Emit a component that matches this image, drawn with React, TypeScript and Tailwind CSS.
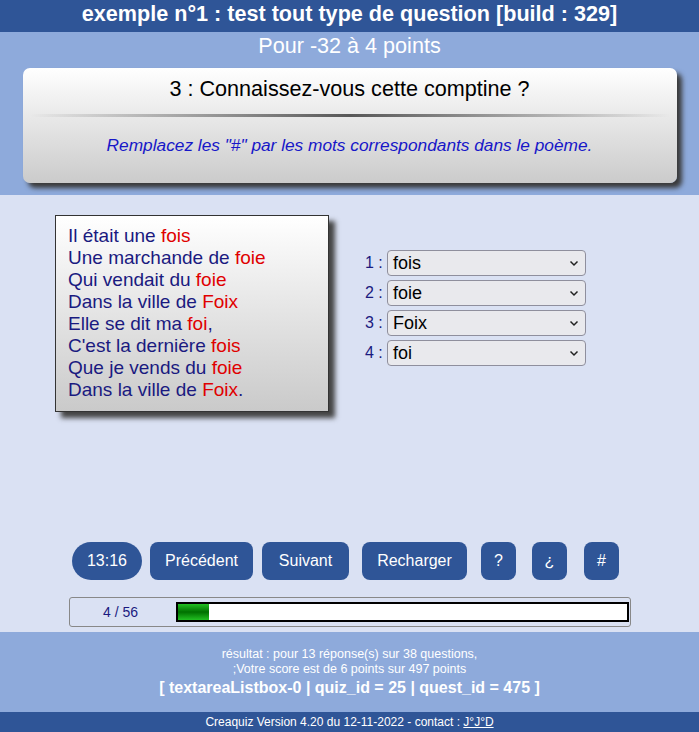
import React from "react";

const R = ({ children }: { children: React.ReactNode }) => (
  <span className="text-[#e00000]">{children}</span>
);

const options = ["fois", "foie", "Foix", "foi"];

export default function App() {
  return (
    <div
      className="w-[699px] h-[732px] flex flex-col bg-[#dae1f3]"
      style={{ fontFamily: '"Liberation Sans", Arial, sans-serif' }}
    >
      {/* header */}
      <div className="h-[32px] bg-[#2f5597] flex items-center justify-center text-white font-bold text-[21.6px] pb-[3px]">
        exemple n°1 : test tout type de question [build : 329]
      </div>
      {/* top blue */}
      <div className="h-[163px] bg-[#8eaadb] flex flex-col items-center">
        <div className="h-[28px] flex items-center text-white text-[21.6px]">
          Pour -32 à 4 points
        </div>
        <div className="mt-[8px] w-[654px] h-[115px] rounded-[7px] bg-gradient-to-b from-white to-[#cbcbcb] shadow-[5px_5px_5px_#3a3a3a] flex flex-col items-center">
          <div className="mt-[9px] h-[24px] flex items-center text-[21.6px] text-black">
            3 : Connaissez-vous cette comptine ?
          </div>
          <div className="mt-[13px] w-[640px] h-[3px] bg-[linear-gradient(to_right,rgba(0,0,0,0),#333_50%,rgba(0,0,0,0))] opacity-80" />
          <div className="mt-[16px] italic text-[17.3px] text-[#1717c8]">
            Remplacez les "#" par les mots correspondants dans le poème.
          </div>
        </div>
      </div>
      {/* main */}
      <div className="h-[437px] flex flex-col">
        <div className="h-[347px] flex pt-[20px]">
          <div className="ml-[55px] w-[274px] h-[197px] border border-[#333] bg-gradient-to-b from-white to-[#cacaca] shadow-[6px_6px_5px_#444] pl-[12px] pt-[9px] text-[19px] leading-[22px] text-[#1a1a80]">
            <div>Il était une <R>fois</R></div>
            <div>Une marchande de <R>foie</R></div>
            <div>Qui vendait du <R>foie</R></div>
            <div>Dans la ville de <R>Foix</R></div>
            <div>Elle se dit ma <R>foi</R>,</div>
            <div>C'est la dernière <R>fois</R></div>
            <div>Que je vends du <R>foie</R></div>
            <div>Dans la ville de <R>Foix</R>.</div>
          </div>
          <div className="ml-[36px] mt-[35px] flex flex-col gap-[4px]">
            {options.map((o, i) => (
              <div key={o} className="flex items-center h-[26px]">
                <span className="w-[22px] text-[16px] text-[#1a1a80]">{i + 1} :</span>
                <div className="w-[199px] h-[26px] rounded-[4px] border border-[#8f8f9d] bg-[#e9e9ed] flex items-center justify-between pl-[5px] pr-[6px] text-[18px] text-black">
                  <span>{o}</span>
                  <svg width="10" height="7" viewBox="0 0 10 7">
                    <path d="M1.5 1.5 L5 5 L8.5 1.5" fill="none" stroke="#222" strokeWidth="1.5" />
                  </svg>
                </div>
              </div>
            ))}
          </div>
        </div>
        {/* buttons */}
        <div className="h-[38px] flex items-center text-white text-[16px]">
          <div className="ml-[72px] w-[70px] h-[38px] rounded-full bg-[#2f5597] flex items-center justify-center">13:16</div>
          <div className="ml-[8px] w-[103px] h-[38px] rounded-[8px] bg-[#2f5597] flex items-center justify-center">Précédent</div>
          <div className="ml-[9px] w-[87px] h-[38px] rounded-[8px] bg-[#2f5597] flex items-center justify-center">Suivant</div>
          <div className="ml-[13px] w-[105px] h-[38px] rounded-[8px] bg-[#2f5597] flex items-center justify-center">Recharger</div>
          <div className="ml-[14px] w-[35px] h-[38px] rounded-[8px] bg-[#2f5597] flex items-center justify-center">?</div>
          <div className="ml-[16px] w-[35px] h-[38px] rounded-[8px] bg-[#2f5597] flex items-center justify-center">¿</div>
          <div className="ml-[17px] w-[35px] h-[38px] rounded-[8px] bg-[#2f5597] flex items-center justify-center">#</div>
        </div>
        {/* progress */}
        <div className="mt-[17px] ml-[69px] w-[562px] h-[30px] rounded-[3px] border border-[#888] flex items-center">
          <span className="ml-[33px] w-[73px] text-[14px] text-[#1a1a80]">4 / 56</span>
          <div className="w-[453px] h-[20px] border-2 border-black bg-white">
            <div className="w-[31px] h-full bg-[linear-gradient(to_bottom,#22c022,#007000_50%,#22c022)]" />
          </div>
        </div>
      </div>
      {/* footer */}
      <div className="h-[80px] bg-[#8eaadb] flex flex-col items-center pt-[15px] text-white">
        <div className="text-[12.5px] leading-[15px]">résultat : pour 13 réponse(s) sur 38 questions,</div>
        <div className="text-[12.5px] leading-[15px]">;Votre score est de 6 points sur 497 points</div>
        <div className="text-[16px] leading-[22px] font-bold">[ textareaListbox-0 | quiz_id = 25 | quest_id = 475 ]</div>
      </div>
      <div className="h-[20px] bg-[#2f5597] flex items-center justify-center text-white text-[12px]">
        Creaquiz Version 4.20 du 12-11-2022 - contact :&nbsp;<span className="underline">J°J°D</span>
      </div>
    </div>
  );
}
